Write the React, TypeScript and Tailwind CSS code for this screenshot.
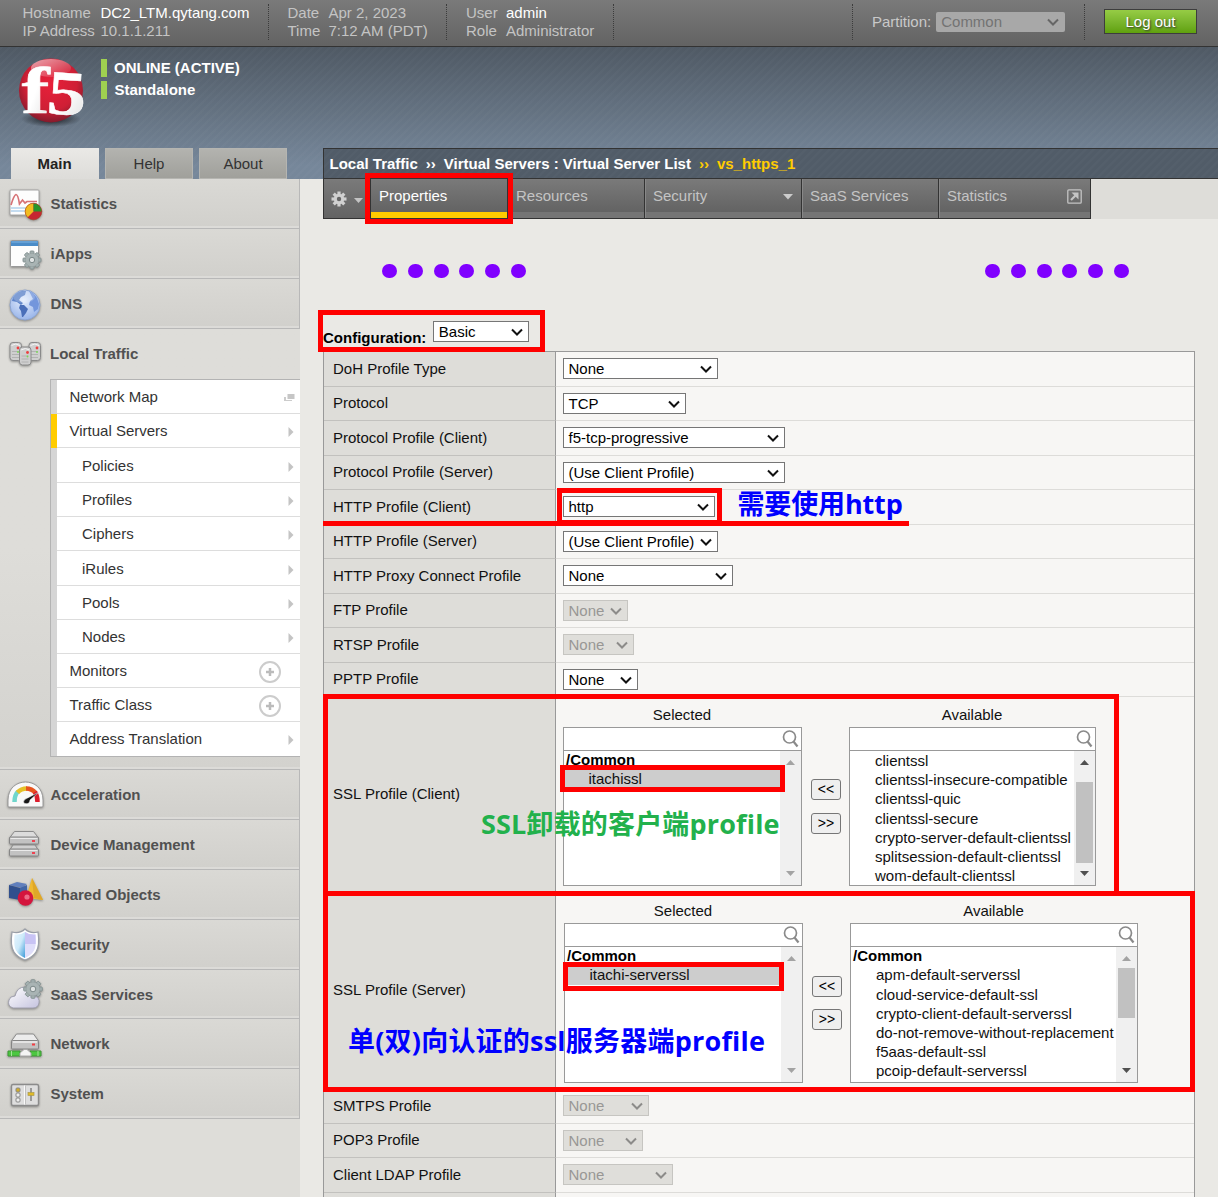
import React from 'react';

type Child = { children: React.ReactNode };

/* ---------- sidebar icons ---------- */

function Icon({ children }: Child) {
  return (
    <svg width="38" height="40" viewBox="0 0 38 40" className="shrink-0 drop-shadow-[0_1px_1px_rgba(0,0,0,0.35)]">
      {children}
    </svg>
  );
}

function Gear({ x, y, r }: { x: number; y: number; r: number }) {
  return (
    <g transform={`translate(${x} ${y})`}>
      {[0, 45, 90, 135].map((a) => (
        <rect key={a} x={-r * 0.22} y={-r} width={r * 0.44} height={r * 2} rx="0.8" fill="#a4b0b0" stroke="#829090" strokeWidth="0.9" transform={`rotate(${a})`} />
      ))}
      <circle r={r * 0.75} fill="#a9b4b4" stroke="#8d9999" strokeWidth="0.5" />
      <circle r={r * 0.3} fill="#dfe3e3" stroke="#7c8989" strokeWidth="1" />
    </g>
  );
}

const icons: Record<string, React.ReactNode> = {
  Statistics: (
    <Icon>
      <rect x="3" y="5" width="29" height="25" rx="1" fill="#fdfdfd" stroke="#a5a5a5" />
      <path d="M4 23h27M4 26h27" stroke="#c4dcf0" strokeWidth="2" />
      <path d="M4 20q3-10 5-10.500 2 0 3.500 9.500l3-4 2.500 3 2-1.500h10" fill="none" stroke="#d67276" strokeWidth="1.700" />
      <circle cx="26.500" cy="26.500" r="8.300" fill="#c62731" />
      <path d="M26.500 26.500L20.500 32.500A8.300 8.300 0 0 1 26.500 18.200z" fill="#f1bc20" />
      <path d="M26.500 26.500V18.200A8.300 8.300 0 0 1 34.800 26.500z" fill="#27962b" />
      <circle cx="26.500" cy="26.500" r="8.300" fill="none" stroke="#a33b1c" strokeWidth="0.6" />
    </Icon>
  ),
  iApps: (
    <Icon>
      <rect x="3.500" y="5.500" width="28" height="26" rx="1" fill="#fdfdfd" stroke="#999" />
      <rect x="4" y="6" width="27" height="5" fill="#4b8cc8" />
      <path d="M4.500 7h26" stroke="#80b4e2" />
      <Gear x={25} y={25} r={9} />
    </Icon>
  ),
  DNS: (
    <Icon>
      <defs>
        <radialGradient id="globe" cx="0.45" cy="0.35" r="0.7">
          <stop offset="0" stopColor="#e3ecfc" />
          <stop offset="1" stopColor="#94b1e8" />
        </radialGradient>
      </defs>
      <circle cx="18" cy="20" r="15" fill="url(#globe)" stroke="#8ba3d0" />
      <path d="M6 12q3-5 9-6l4 0-1 4-4 2-2 3 4 3-2 2-4-3-5-1z" fill="#5f85ca" />
      <path d="M13 20l4 0 4 4-2 4-3 4-1 0-1-6-2-3z" fill="#4a6fb9" />
      <path d="M22 6q5 2 8 7l2 6-1 5-4 3-1-5-4-2 1-4 3-2z" fill="#7396dc" />
      <ellipse cx="17" cy="12" rx="11" ry="6" fill="#fff" opacity="0.2" />
    </Icon>
  ),
  'Local Traffic': (
    <Icon>
      {[[3, 8.500], [22, 8.500], [12.500, 13]].map(([x, y], i) => (
        <g key={i}>
          <rect x={x} y={y} width="11.500" height="18" rx="3" fill="#cfcfcf" stroke="#8a8a8a" />
          <path d={`M${x + 2} ${y + 9}h7M${x + 2} ${y + 12}h7M${x + 2} ${y + 15}h7`} stroke="#b2b2b2" />
          <path d={`M${x + 1.500} ${y + 3}q4.500-3 8.500 0`} stroke="#f5f5f5" fill="none" />
          <circle cx={x + 8} cy={y + 5.500} r="1.400" fill="#ed4040" />
          <circle cx={x + 8} cy={y + 9.500} r="0.9" fill="#77da55" />
        </g>
      ))}
    </Icon>
  ),
  Acceleration: (
    <Icon>
      <path d="M1 30V24C1 0 36 0 36 24v6q0 1-1 1H2q-1 0-1-1z" fill="#f9f9f9" stroke="#979797" />
      <path d="M7.500 26C7.500 21 8.500 18 11 15.500" fill="none" stroke="#6fd6cc" strokeWidth="4.500" />
      <path d="M10.500 16.500Q14 12.500 20 12.500" fill="none" stroke="#e5c128" strokeWidth="4.500" />
      <path d="M19 12.500Q25 12.500 28.500 17" fill="none" stroke="#e8541e" strokeWidth="4.500" />
      <path d="M28 16Q30.500 20 30.500 26" fill="none" stroke="#dc1d2c" strokeWidth="4.500" />
      <path d="M32 16l-9 8q0 3-2 3.500-4 1-4.500-1.500 0-2.500 4-4z" fill="#171717" stroke="#fff" strokeWidth="0.5" />
    </Icon>
  ),
  'Device Management': (
    <Icon>
      <path d="M2.500 12L7.500 5.500h19l5 6.500z" fill="#dcdcdc" stroke="#8b8b8b" />
      <path d="M2.500 24.500l3.500-5.500h22l3.500 5.500z" fill="#d0d0d0" stroke="#8b8b8b" />
      {[11, 23].map((y) => (
        <g key={y}>
          <rect x="2.500" y={y} width="29" height="7" rx="1" fill="#c2c2c2" stroke="#868686" />
          <path d={`M3.500 ${y + 1.500}h27`} stroke="#eaeaea" />
          <rect x="25" y={y + 3} width="3" height="2" fill="#ed4351" />
        </g>
      ))}
    </Icon>
  ),
  'Shared Objects': (
    <Icon>
      <path d="M25 2L19 22l17 2z" fill="#efb932" />
      <path d="M25 2l2 20 9 2z" fill="#dfa728" />
      <path d="M2 9l8-3 10 2-5 4z" fill="#607fbd" />
      <path d="M2 9l11 3v12L2 22z" fill="#304f8d" />
      <path d="M13 12l7-3v12l-7 3z" fill="#4165a6" />
      <circle cx="18.500" cy="22" r="7.800" fill="#d4153d" />
      <circle cx="20" cy="21" r="2.600" fill="#ed6c87" />
    </Icon>
  ),
  Security: (
    <Icon>
      <defs>
        <linearGradient id="shield" y2="1"><stop stopColor="#e7f5fe" /><stop offset="0.5" stopColor="#cdeafa" /><stop offset="1" stopColor="#3d9bd8" /></linearGradient>
      </defs>
      <path d="M18 3q5 5 13 3 2 14-2 20-3 5-11 8-8-3-11-8-4-6-2-20 8 2 13-3z" fill="#fff" stroke="#9a9fa8" strokeWidth="1.200" />
      <path d="M18 6q-4 3-10.500 2.500-1 12 1.500 16 3 5 9 7.500z" fill="url(#shield)" />
      <path d="M18 6q4 3 10.500 2.500 1 12-1.500 16-3 5-9 7.500z" fill="#dfdefa" />
      <path d="M18 6q4 3 10.500 2.500l0.200 9.500H18z" fill="#c8c3f4" />
    </Icon>
  ),
  'SaaS Services': (
    <Icon>
      <defs>
        <linearGradient id="cloud" y2="1"><stop stopColor="#fff" /><stop offset="1" stopColor="#c5c3df" /></linearGradient>
      </defs>
      <path d="M6 32Q0 30 2 24q1-4 6-4 2-9 10-9 9 0 10 9 5 2 4 7-1 5-6 5z" fill="url(#cloud)" stroke="#a0a0ae" />
      <Gear x={26} y={13} r={9.300} />
    </Icon>
  ),
  Network: (
    <Icon>
      <path d="M4.500 16l5-7h17l5 7v7h-27z" fill="#ececec" stroke="#8b8b8b" />
      <rect x="4.500" y="15.500" width="27" height="8.500" rx="1" fill="#c2c2c2" stroke="#858585" />
      <path d="M6 17h24" stroke="#eee" strokeWidth="1.500" />
      <rect x="25" y="18.500" width="3" height="2" fill="#f13d43" />
      <path d="M1 26h12v5H1zM23 26h11v5H23z" fill="#4cc741" stroke="#3d9834" />
      <path d="M13 31v-3l4-3.500h3l4 3.500v3z" fill="#f4f4f4" stroke="#aaa" />
      <path d="M4.500 26v5M31 26v5" stroke="#a4e09a" />
    </Icon>
  ),
  System: (
    <Icon>
      <rect x="4.500" y="9.500" width="27" height="21" rx="1.500" fill="#dedede" stroke="#8b8b8b" strokeWidth="1.400" />
      <path d="M18.500 10.500v19" stroke="#c0c0c0" />
      <path d="M17.500 10.500v19" stroke="#fafafa" />
      <rect x="9" y="13" width="4" height="4" rx="1" fill="#d3ae28" stroke="#888" />
      <rect x="9" y="18" width="4" height="4" rx="1" fill="#eee" stroke="#888" />
      <rect x="9" y="23" width="4" height="4" rx="1" fill="#eee" stroke="#888" />
      <path d="M24 13v13" stroke="#888" strokeWidth="1.600" />
      <rect x="21" y="17.500" width="6" height="3" fill="#e0ba28" stroke="#a89a50" strokeWidth="0.700" />
    </Icon>
  ),
};

function MenuItem({ label, h }: { label: string; h: string }) {
  return (
    <div className={`flex items-start border-b border-r border-[#b8b8b8] bg-linear-to-b from-[#dad9d5] to-[#d1d0cc] pl-[7px] shadow-[inset_0_-2px_0_#dcdbd8] ${h}`}>
      <div className="flex h-[49px] items-center pt-0.5">
        {icons[label]}
        <span className="ml-[5.5px] text-[15px] font-bold text-[#515151]">{label}</span>
      </div>
    </div>
  );
}

const submenu: [string, string, string, string][] = [
  ['Network Map', 'h-[34px]', 'pl-[12.5px]', 'map'],
  ['Virtual Servers', 'h-[34px]', 'pl-[12.5px]', 'arrow'],
  ['Policies', 'h-[35px]', 'pl-[25px]', 'arrow'],
  ['Profiles', 'h-[34px]', 'pl-[25px]', 'arrow'],
  ['Ciphers', 'h-[34px]', 'pl-[25px]', 'arrow'],
  ['iRules', 'h-[35px]', 'pl-[25px]', 'arrow'],
  ['Pools', 'h-[34px]', 'pl-[25px]', 'arrow'],
  ['Nodes', 'h-[34px]', 'pl-[25px]', 'arrow'],
  ['Monitors', 'h-[34px]', 'pl-[12.5px]', 'plus'],
  ['Traffic Class', 'h-[34px]', 'pl-[12.5px]', 'plus'],
  ['Address Translation', 'h-[34px]', 'pl-[12.5px]', 'arrow'],
];

function SubIcon({ kind }: { kind: string }) {
  if (kind === 'plus')
    return (
      <svg width="24" height="24" viewBox="0 0 24 24" className="mr-[18px]">
        <circle cx="12" cy="12" r="10" fill="none" stroke="#ccc" strokeWidth="2" />
        <path d="M12 8v8M8 12h8" stroke="#bbb" strokeWidth="2.500" />
      </svg>
    );
  if (kind === 'map')
    return (
      <svg width="11" height="9" viewBox="0 0 11 9" className="mr-[5px]">
        <path d="M0 4h2v3h6v1H0z" fill="#ccc" />
        <rect x="3.500" y="1" width="7" height="5" fill="#c6c6c6" />
      </svg>
    );
  return (
    <svg width="6" height="10" viewBox="0 0 6 10" className="mr-[6px] mt-px">
      <path d="M0.500 0v10L5.500 5z" fill="#c4c4c4" />
    </svg>
  );
}

function Sidebar() {
  return (
    <aside className="w-[300px] shrink-0 bg-[#deddd9]">
      <MenuItem label="Statistics" h="h-[50px]" />
      <MenuItem label="iApps" h="h-[50px]" />
      <MenuItem label="DNS" h="h-[50px]" />
      <section className="h-[441px] border-b border-[#b8b8b8] bg-linear-to-b from-[#deddd9] from-50% to-[#d3d2ce] shadow-[inset_0_-2px_0_#dcdbd8]">
        <div className="flex h-[50px] items-center pl-[7px]">
          {icons['Local Traffic']}
          <span className="ml-[5px] text-[15px] font-bold text-[#515151]">Local Traffic</span>
        </div>
        <div className="ml-[50px] border-y border-l border-[#b3b3b3]">
          {submenu.map(([label, h, pad, kind]) => (
            <div key={label} className={`flex ${h}`}>
              <span className={label === 'Virtual Servers' ? 'w-1.5 bg-[#ffcc00]' : 'w-1.5 bg-[#d5d5d5]'} />
              <div className={`flex flex-1 items-center justify-between border-b bg-white pt-0.5 text-[15px] text-[#333] ${pad} ${label === 'Address Translation' ? 'border-white' : 'border-[#ddd]'}`}>
                <span>{label}</span>
                <SubIcon kind={kind} />
              </div>
            </div>
          ))}
        </div>
      </section>
      <MenuItem label="Acceleration" h="h-[50px]" />
      <MenuItem label="Device Management" h="h-[50px]" />
      <MenuItem label="Shared Objects" h="h-[50px]" />
      <MenuItem label="Security" h="h-[50px]" />
      <MenuItem label="SaaS Services" h="h-[49px]" />
      <MenuItem label="Network" h="h-[50px]" />
      <MenuItem label="System" h="h-[50px]" />
    </aside>
  );
}

/* ---------- form pieces ---------- */

function Select({ children, w, disabled = false }: Child & { w: string; disabled?: boolean }) {
  return (
    <div className={`flex h-[21px] items-center justify-between border pl-[4.5px] pr-1 text-[15px] leading-[19px] ${w} ${disabled ? 'border-[#c6c5c1] bg-[#dfdeda] text-[#989795]' : 'border-[#767676] bg-white text-black'}`}>
      <span className="whitespace-nowrap">{children}</span>
      <svg width="14" height="10" viewBox="0 0 14 10" className="shrink-0">
        <path d="M2 2.500l5 5 5-5" fill="none" stroke={disabled ? '#8c8b89' : '#111'} strokeWidth="2" />
      </svg>
    </div>
  );
}

function Row({ label, h, children, pad = 'pt-1.5' }: Child & { label: string; h: string; pad?: string }) {
  return (
    <div className={`flex ${h}`}>
      <div className="flex w-[232px] items-center border-b border-r border-b-[#c2c1be] border-r-[#999] bg-[#deddd9] pl-[9px] text-[15px] text-[#111]">{label}</div>
      <div className={`flex-1 border-b border-[#dddcd9] bg-[#f7f6f4] pl-[7px] ${pad}`}>{children}</div>
    </div>
  );
}

function Scrollbar({ up, down, thumb }: { up: string; down: string; thumb?: string }) {
  return (
    <div className="flex w-[21px] shrink-0 flex-col items-center bg-[#f0f0f0]">
      <svg width="9" height="5" viewBox="0 0 9 5" className="mt-[9px] shrink-0"><path d="M0 5L4.500 0 9 5z" fill={up} /></svg>
      {thumb && <div className={`w-[17px] shrink-0 bg-[#c1c1c1] ${thumb}`} />}
      <svg width="9" height="5" viewBox="0 0 9 5" className="mb-[9px] mt-auto shrink-0"><path d="M0 0L4.500 5 9 0z" fill={down} /></svg>
    </div>
  );
}

function ListBox({ title, w, h, folder, items, selected = false, thumb, up, down }: {
  title: string; w: string; h: string; folder: boolean; items: string[]; selected?: boolean; thumb?: string; up: string; down: string;
}) {
  return (
    <div className={w}>
      <div className="h-[22px] pr-px text-center text-[15px] leading-5 text-[#111]">{title}</div>
      <div className={`flex flex-col border border-[#999] bg-white ${h}`}>
        <div className="flex h-[23px] shrink-0 justify-end border-b border-[#999] pr-0.5 pt-0.5">
          <svg width="17" height="18" viewBox="0 0 17 18" fill="none" stroke="#8a8a8a">
            <circle cx="7.500" cy="7" r="6" strokeWidth="1.700" />
            <path d="M11.500 11.500l4 5" strokeWidth="2.200" />
          </svg>
        </div>
        <div className="flex min-h-0 flex-1">
          <div className="min-w-0 flex-1 overflow-hidden text-[15px] leading-[19.2px] text-[#111]">
            {folder && <div className="h-[18.4px] pl-0.5 font-bold leading-[18px] text-black">/Common</div>}
            {items.map((t) => (
              <div key={t} className={selected ? 'bg-[#cdcdcd] pl-[24.5px]' : 'whitespace-nowrap pl-[25px]'}>{t}</div>
            ))}
          </div>
          <Scrollbar up={up} down={down} thumb={thumb} />
        </div>
      </div>
    </div>
  );
}

function MoveButtons({ top, gap }: { top: string; gap: string }) {
  return (
    <div className={`ml-[9px] mr-2 flex w-[30px] flex-col ${gap} ${top}`}>
      {['<<', '>>'].map((t) => (
        <button key={t} className="h-[21px] rounded-[3px] border border-[#767676] bg-[#efefef] text-[14px] leading-[19px] text-black">{t}</button>
      ))}
    </div>
  );
}

const clientProfiles = ['clientssl', 'clientssl-insecure-compatible', 'clientssl-quic', 'clientssl-secure', 'crypto-server-default-clientssl', 'splitsession-default-clientssl', 'wom-default-clientssl'];
const serverProfiles = ['apm-default-serverssl', 'cloud-service-default-ssl', 'crypto-client-default-serverssl', 'do-not-remove-without-replacement', 'f5aas-default-ssl', 'pcoip-default-serverssl'];

function Configuration() {
  return (
    <div className="w-[872px] border-x border-t border-[#999]">
      <Row label="DoH Profile Type" h="h-[35px]"><Select w="w-[155px]">None</Select></Row>
      <Row label="Protocol" h="h-[34px]"><Select w="w-[123px]">TCP</Select></Row>
      <Row label="Protocol Profile (Client)" h="h-[35px]"><Select w="w-[222px]">f5-tcp-progressive</Select></Row>
      <Row label="Protocol Profile (Server)" h="h-[34px]"><Select w="w-[222px]">(Use Client Profile)</Select></Row>
      <Row label="HTTP Profile (Client)" h="h-[35px]"><Select w="w-[152px]">http</Select></Row>
      <Row label="HTTP Profile (Server)" h="h-[34px]"><Select w="w-[155px]">(Use Client Profile)</Select></Row>
      <Row label="HTTP Proxy Connect Profile" h="h-[35px]"><Select w="w-[170px]">None</Select></Row>
      <Row label="FTP Profile" h="h-[34px]"><Select w="w-[65px]" disabled>None</Select></Row>
      <Row label="RTSP Profile" h="h-[35px]"><Select w="w-[71px]" disabled>None</Select></Row>
      <Row label="PPTP Profile" h="h-[34px]"><Select w="w-[75px]">None</Select></Row>
      <Row label="SSL Profile (Client)" h="h-[196px]" pad="pt-2">
        <div className="flex">
          <ListBox title="Selected" w="w-[239px]" h="h-[159px]" folder items={['itachissl']} selected up="#a3a3a3" down="#a3a3a3" />
          <MoveButtons top="pt-[74px]" gap="gap-[13px]" />
          <ListBox title="Available" w="w-[247px]" h="h-[159px]" folder={false} items={clientProfiles} thumb="mt-[17px] h-[81px]" up="#505050" down="#505050" />
        </div>
      </Row>
      <Row label="SSL Profile (Server)" h="h-[196px]" pad="pt-2">
        <div className="ml-px flex">
          <ListBox title="Selected" w="w-[239px]" h="h-[160px]" folder items={['itachi-serverssl']} selected up="#a3a3a3" down="#a3a3a3" />
          <MoveButtons top="pt-[75px]" gap="gap-3" />
          <ListBox title="Available" w="w-[288px]" h="h-[160px]" folder items={serverProfiles} thumb="mt-[7px] h-[50px]" up="#a3a3a3" down="#505050" />
        </div>
      </Row>
      <Row label="SMTPS Profile" h="h-[35px]"><Select w="w-[86px]" disabled>None</Select></Row>
      <Row label="POP3 Profile" h="h-[34px]"><Select w="w-[80px]" disabled>None</Select></Row>
      <Row label="Client LDAP Profile" h="h-[35px]"><Select w="w-[110px]" disabled>None</Select></Row>
      <Row label="" h="h-[8px]">{null}</Row>
    </div>
  );
}

/* ---------- header ---------- */

function Separator() {
  return <div className="mt-1 h-9 w-px border-l border-dotted border-[#3c3c3c]" />;
}

function InfoPair({ rows, w }: { rows: [string, string, string][]; w: string }) {
  return (
    <div className="pt-1 text-[15px] leading-[18px]">
      {rows.map(([k, v, c]) => (
        <div key={k} className="flex whitespace-nowrap">
          <span className={`text-[#c4c4c4] ${w}`}>{k}</span>
          <span className={c}>{v}</span>
        </div>
      ))}
    </div>
  );
}

function TopBar() {
  return (
    <div className="flex h-[47px] border-b border-[#333] bg-linear-to-b from-[#7a7a7a] to-[#636363]">
      <div className="w-[268px] pl-[22.5px]">
        <InfoPair w="w-[78px]" rows={[['Hostname', 'DC2_LTM.qytang.com', 'text-white'], ['IP Address', '10.1.1.211', 'text-[#c4c4c4]']]} />
      </div>
      <Separator />
      <div className="w-[177px] pl-[18.5px]">
        <InfoPair w="w-[41px]" rows={[['Date', 'Apr 2, 2023', 'text-[#c4c4c4]'], ['Time', '7:12 AM (PDT)', 'text-[#c4c4c4]']]} />
      </div>
      <Separator />
      <div className="w-[166px] pl-[19px]">
        <InfoPair w="w-10" rows={[['User', 'admin', 'text-white'], ['Role', 'Administrator', 'text-[#c4c4c4]']]} />
      </div>
      <Separator />
      <div className="flex-1" />
      <Separator />
      <div className="flex w-[231px] pl-[19px] pt-[11px] text-[15px] leading-[21px] text-[#c9c9c9]">
        Partition:
        <div className="ml-[5px] mt-px flex h-5 w-[129px] items-center justify-between rounded-[2px] bg-[#a8a8a8] pb-px pl-[5px] pr-[5px] text-[#737373]">
          Common
          <svg width="14" height="10" viewBox="0 0 14 10"><path d="M2 2.500l5 5 5-5" fill="none" stroke="#666" strokeWidth="2" /></svg>
        </div>
      </div>
      <Separator />
      <button className="ml-[19px] mr-[21px] mt-[9px] h-[25px] w-[93px] border border-[#3d3d3d] bg-linear-to-b from-[#96cc45] to-[#60a10c] pb-px text-[15px] leading-[21px] text-white [text-shadow:1px_1px_2px_#333]">Log out</button>
    </div>
  );
}

function Logo() {
  return (
    <svg width="72" height="84" viewBox="0 -8 72 84" className="-mt-2 shrink-0 overflow-visible">
      <defs>
        <radialGradient id="ball" cx="0.5" cy="0.4" r="0.62">
          <stop offset="0" stopColor="#e8203a" />
          <stop offset="0.65" stopColor="#cf1f35" />
          <stop offset="1" stopColor="#7d1a2b" />
        </radialGradient>
        <radialGradient id="ballShadow"><stop stopColor="#16191d" /><stop offset="1" stopColor="#16191d" stopOpacity="0" /></radialGradient>
        <linearGradient id="gloss" y2="1"><stop stopColor="#fff" stopOpacity="0.6" /><stop offset="1" stopColor="#fff" stopOpacity="0" /></linearGradient>
        <linearGradient id="lettering" y2="1"><stop offset="0.5" stopColor="#fff" /><stop offset="1" stopColor="#ddd" /></linearGradient>
      </defs>
      <ellipse cx="36" cy="63" rx="30" ry="8" fill="url(#ballShadow)" />
      <circle cx="36" cy="34.500" r="32" fill="url(#ball)" />
      <ellipse cx="36" cy="12" rx="20" ry="9" fill="url(#gloss)" />
      <text transform="translate(6.500 57) scale(1.28 1)" fontFamily="Liberation Serif, serif" fontWeight="700" fontSize="66" fill="url(#lettering)" stroke="#fff" strokeWidth="0.5">f</text>
      <text transform="translate(31 57) rotate(4) scale(1.24 1)" fontFamily="Liberation Serif, serif" fontWeight="700" fontSize="63" fill="url(#lettering)" stroke="#fff" strokeWidth="0.5">5</text>
    </svg>
  );
}

function Tab({ children, w, active = false, extra }: Child & { w: string; active?: boolean; extra?: React.ReactNode }) {
  return (
    <div className={`flex flex-col border-r border-[#333] ${w}`}>
      <div className={`flex h-[33px] items-center justify-between bg-linear-to-b from-[#7a7a7a] to-[#636363] pt-0.5 text-[15px] ${active ? 'pl-2 text-white' : 'border-l border-[#888] pl-[7px] text-[#c4c4c4]'}`}>
        <span>{children}</span>
        {extra}
      </div>
      <div className={active ? 'h-1.5 bg-[#ffcc00]' : 'h-1.5 border-l border-[#888] bg-[#757575]'} />
    </div>
  );
}

const stripes = 'bg-[repeating-linear-gradient(135deg,rgba(255,255,255,0.02)_0px,rgba(255,255,255,0.02)_2px,transparent_3px,transparent_5.66px),linear-gradient(to_bottom,#4f5964,#76879a_90%)]';

function Header() {
  return (
    <div className={`flex h-[132px] ${stripes}`}>
      <div className="flex w-[323px] shrink-0 flex-col justify-between">
        <div className="flex pl-[15px] pt-[9px]">
          <Logo />
          <div className="ml-3.5 pt-[3px] text-[15px] font-bold leading-[18px] text-white">
            <div className="border-l-[6px] border-[#9fd050] pl-[7px]">ONLINE (ACTIVE)</div>
            <div className="mt-1 border-l-[6px] border-[#9fd050] pl-[7.5px]">Standalone</div>
          </div>
        </div>
        <div className="flex gap-1.5 pl-[11px] text-[15px]">
          <div className="h-[31px] w-[88px] bg-linear-to-b from-[#eae9e6] to-[#dddcd9] pr-px text-center font-bold leading-[31px] text-[#222]">Main</div>
          <div className="h-[31px] w-[88px] border border-[#b5b5b1] bg-linear-to-b from-[#b3b3af] to-[#a0a09b] text-center leading-[30px] text-[#333]">Help</div>
          <div className="h-[31px] w-[88px] border border-[#b5b5b1] bg-linear-to-b from-[#b3b3af] to-[#a0a09b] text-center leading-[30px] text-[#333]">About</div>
        </div>
      </div>
      <div className="flex flex-1 items-end">
        <div className="flex h-[31px] flex-1 items-center gap-2 whitespace-nowrap border-y border-l border-[#333] bg-[repeating-linear-gradient(135deg,rgba(255,255,255,0.02)_0px,rgba(255,255,255,0.02)_2px,transparent_3px,transparent_5.66px)] bg-[#515c68] pl-[5.5px] pt-0.5 text-[15px] font-bold text-white">
          <span>Local Traffic</span>
          <span>››</span>
          <span>Virtual Servers : Virtual Server List</span>
          <span className="text-[#ffcc00]">››</span>
          <span className="text-[#ffcc00]">vs_https_1</span>
        </div>
      </div>
    </div>
  );
}

function TabBar() {
  return (
    <div className="flex h-10 bg-[#deddd9]">
      <div className="flex w-[768px] border-b border-l border-[#333]">
        <div className="flex w-[47px] items-center gap-[7px] border-r border-[#333] bg-linear-to-b from-[#7a7a7a] to-[#636363] pl-[7px]">
          <svg width="16" height="16" viewBox="-8 -8 16 16">
            {[0, 45, 90, 135].map((a) => (
              <rect key={a} x="-1.600" y="-7.500" width="3.200" height="15" fill="#d0d0d0" transform={`rotate(${a})`} />
            ))}
            <circle r="5.200" fill="#d0d0d0" />
            <circle r="2.200" fill="#666" />
          </svg>
          <svg width="9" height="5" viewBox="0 0 9 5" className="mt-1"><path d="M0 0h9L4.500 5z" fill="#c4c4c4" /></svg>
        </div>
        <Tab w="w-[137px]" active>Properties</Tab>
        <Tab w="w-[137px]">Resources</Tab>
        <Tab w="w-[157px]" extra={<svg width="10" height="6" viewBox="0 0 10 6" className="mr-[8px]"><path d="M0 0h10L5 5.500z" fill="#ccc" /></svg>}>Security</Tab>
        <Tab w="w-[137px]">SaaS Services</Tab>
        <Tab
          w="w-[152px]"
          extra={
            <svg width="15" height="15" viewBox="0 0 15 15" className="mr-2" fill="none" stroke="#c4c4c4">
              <rect x="0.800" y="0.800" width="13.400" height="13.400" rx="1" strokeWidth="1.300" />
              <path d="M4 11l5-5" strokeWidth="2.200" />
              <path d="M4.500 3.500h7v7z" fill="#c4c4c4" stroke="none" />
            </svg>
          }
        >
          Statistics
        </Tab>
      </div>
    </div>
  );
}

/* ---------- annotations drawn over the page ---------- */

function Dots({ at }: { at: string }) {
  return (
    <div className={`absolute top-[264px] flex gap-[10.7px] ${at}`}>
      {[0, 1, 2, 3, 4, 5].map((i) => (
        <span key={i} className="h-3.5 w-[15px] rounded-full bg-[#8000ff]" />
      ))}
    </div>
  );
}

const note = 'absolute whitespace-nowrap font-["Open_Sans","Noto_Sans_CJK_SC",sans-serif] text-[27px] leading-9 font-bold';
const frame = 'absolute border-[5px] border-[#ff0000]';

function Annotations() {
  return (
    <>
      <Dots at="left-[382.3px]" />
      <Dots at="left-[985.3px]" />
      <div className={`${frame} left-[365px] top-[173px] h-[51px] w-[148px]`} />
      <div className={`${frame} left-[318px] top-[310px] h-[42px] w-[227px]`} />
      <div className={`${frame} left-[557px] top-[488px] h-[37px] w-[165px]`} />
      <div className="absolute left-[323px] top-[521px] h-[5px] w-[586px] bg-[#ff0000]" />
      <div className={`${frame} left-[323px] top-[694px] h-[202px] w-[796px]`} />
      <div className={`${frame} left-[323px] top-[891px] h-[201px] w-[872px]`} />
      <div className={`${frame} left-[560px] top-[765px] h-[27px] w-[225px]`} />
      <div className={`${frame} left-[563px] top-[962px] h-[29px] w-[221px]`} />
      <div className={`${note} left-[737.5px] top-[486px] tracking-[-0.15px] text-[#0000ff]`}>需要使用http</div>
      <div className={`${note} left-[481px] top-[806px] tracking-[0.17px] text-[#22b14c]`}>SSL卸载的客户端profile</div>
      <div className={`${note} left-[348px] top-[1023px] tracking-[0.22px] text-[#0000ff]`}>单(双)向认证的ssl服务器端profile</div>
    </>
  );
}

export default function App() {
  return (
    <div className='relative h-[1197px] w-[1218px] overflow-hidden bg-[#deddd9] font-["Liberation_Sans",Arial,sans-serif]'>
      <TopBar />
      <Header />
      <div className="flex h-[1018px]">
        <Sidebar />
        <main className="flex-1 bg-[#eae9e5]">
          <div className="pl-[23px]"><TabBar /></div>
          <div className="flex h-[132px] items-end pl-[23px]">
            <span className="mb-[5px] text-[15px] font-bold leading-[17px] text-black">Configuration:</span>
            <div className="mb-[9px] ml-[7px]"><Select w="w-24">Basic</Select></div>
          </div>
          <div className="pl-[23px]"><Configuration /></div>
        </main>
      </div>
      <Annotations />
    </div>
  );
}
